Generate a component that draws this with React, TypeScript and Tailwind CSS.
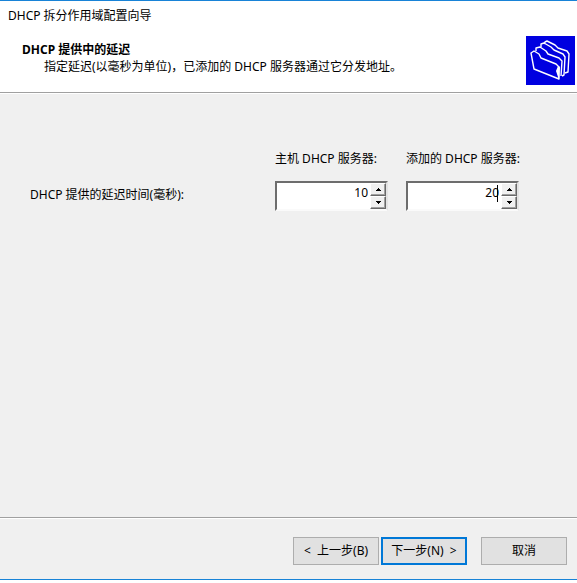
import { useState } from "react";

type SpinBoxProps = { id: string; label: string; initial: number; active?: boolean };

function SpinBox({ id, label, initial, active }: SpinBoxProps) {
  const [value, setValue] = useState(String(initial));
  const step = (amount: number) => setValue(String(Math.max(0, Number(value) + amount)));
  const arrow =
    "flex h-[13px] w-4 items-center justify-center border border-t-white border-l-white border-r-[#696969] border-b-[#696969] bg-[#f0f0f0] shadow-[inset_-1px_-1px_#a0a0a0]";
  return (
    <div className="w-[113px]">
      <label htmlFor={id} className="block h-5 whitespace-nowrap">
        {label}
      </label>
      <div className="relative mt-3 flex h-[30px] border-2 border-t-[#6d6d6d] border-r-[#e3e3e3] border-b-[#fafafa] border-l-[#6d6d6d] bg-white">
        <input
          id={id}
          value={value}
          onChange={(e) => setValue(e.target.value)}
          className="h-5 min-w-0 flex-1 bg-transparent pr-[2px] text-right text-[12px] outline-none"
        />
        {active && <span className="absolute top-[2px] right-[19px] h-[17px] w-px bg-black" />}
        <div className="flex flex-col">
          <button type="button" aria-label="增加" onClick={() => step(1)} className={arrow}>
            <svg width="5" height="3" viewBox="0 0 5 3" shapeRendering="crispEdges">
              <path d="M2 0h1v1h1v1h1v1H0V2h1V1h1z" />
            </svg>
          </button>
          <button type="button" aria-label="减少" onClick={() => step(-1)} className={arrow}>
            <svg width="5" height="3" viewBox="0 0 5 3" shapeRendering="crispEdges">
              <path d="M0 0h5v1H4v1H3v1H2V2H1V1H0z" />
            </svg>
          </button>
        </div>
      </div>
    </div>
  );
}

function FoldersIcon() {
  return (
    <svg width="49" height="49" viewBox="0 0 49 49" className="shrink-0">
      <rect width="49" height="49" fill="#0000e0" />
      <g fill="none" stroke="#fff" strokeWidth="1.4" strokeLinejoin="round">
        <path d="M18 8l1-2 2-1 8 4 3 3 9 3 2 3-1 18-3 1" />
        <path d="M15 11V8l3-1 7 4 3 3 9 4 2 3-1 18-2 1" />
        <path d="M10 15v-3l4-1 6 4 2 3 11 4 3 3-1 15" />
        <path d="M5 17l3-2 5 3 2 4 15 6 3 3v12L8 33z" />
      </g>
      <path d="M32 30l2 1-1 13-3-9z" fill="#fff" />
    </svg>
  );
}

export default function App() {
  const button = "h-7 w-[86px] border bg-[#e1e1e1] whitespace-pre";
  return (
    <div className="flex min-h-screen flex-col bg-white pb-[3px] font-['Noto_Sans','Noto_Sans_CJK_SC',sans-serif] text-[12px] leading-5 text-black">
      <main className="flex flex-1 flex-col border-t border-b border-[#1883d7] bg-[#f0f0f0]">
        <header className="border-b border-[#a0a0a0] bg-white">
          <h1 className="h-[34px] pt-[5px] pl-2">DHCP 拆分作用域配置向导</h1>
          <div className="flex justify-between pt-px pr-[2px] pb-[7px]">
            <div className="pt-[5px] pl-[22px] leading-[17px]">
              <h2 className="font-bold">DHCP 提供中的延迟</h2>
              <p className="pl-[22px]">指定延迟(以毫秒为单位)，已添加的 DHCP 服务器通过它分发地址。</p>
            </div>
            <FoldersIcon />
          </div>
        </header>
        <form className="flex flex-1 flex-col border-t border-white">
          <section className="flex flex-1 items-start pt-[55px] pl-[30px]">
            <p className="w-[245px] pt-9">DHCP 提供的延迟时间(毫秒):</p>
            <div className="flex gap-[18px]">
              <SpinBox id="host" label="主机 DHCP 服务器:" initial={10} />
              <SpinBox id="added" label="添加的 DHCP 服务器:" initial={20} active />
            </div>
          </section>
          <footer className="flex justify-end border-t border-[#a0a0a0] pt-[19px] pr-[10px] pb-[14px] shadow-[inset_0_1px_white]">
            <button type="button" className={`${button} border-[#adadad]`}>{"<  上一步(B)"}</button>
            <button type="button" className={`${button} ml-[2px] border-2 border-[#0078d7]`}>{"下一步(N)  >"}</button>
            <button type="button" className={`${button} ml-[14px] border-[#adadad]`}>取消</button>
          </footer>
        </form>
      </main>
    </div>
  );
}
